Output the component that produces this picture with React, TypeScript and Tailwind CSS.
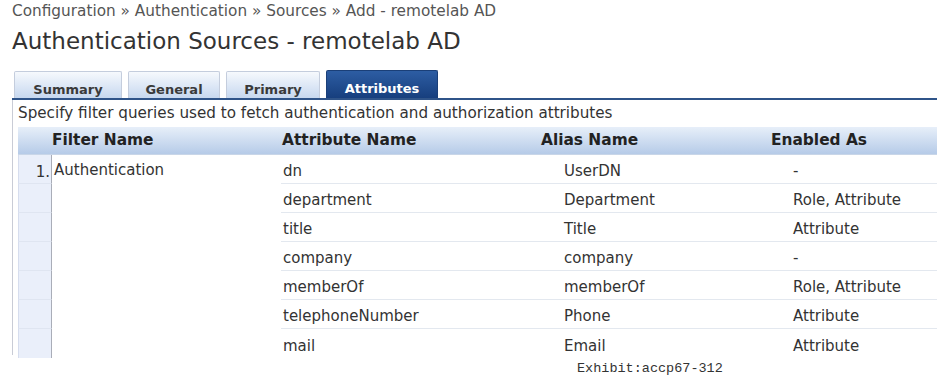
import React from "react";

const rows = [
  { attr: "dn", alias: "UserDN", en: "-" },
  { attr: "department", alias: "Department", en: "Role, Attribute" },
  { attr: "title", alias: "Title", en: "Attribute" },
  { attr: "company", alias: "company", en: "-" },
  { attr: "memberOf", alias: "memberOf", en: "Role, Attribute" },
  { attr: "telephoneNumber", alias: "Phone", en: "Attribute" },
  { attr: "mail", alias: "Email", en: "Attribute" },
];

const tabs = [
  { name: "Summary", w: "w-[108px]" },
  { name: "General", w: "w-[92px]" },
  { name: "Primary", w: "w-[94px]" },
];

export default function App() {
  return (
    <div className="w-[942px] h-[376px] overflow-hidden bg-white font-['DejaVu_Sans',sans-serif] text-[#333]">
      <div className="pl-3 pt-[2px] text-[15.3px] leading-[18px] text-[#555]">
        Configuration » Authentication » Sources » Add - remotelab AD
      </div>
      <div className="pl-3 mt-[7px] text-[23px] leading-[28px] text-[#333]">
        Authentication Sources - remotelab AD
      </div>

      <div className="ml-3 mr-[5px] mt-[15px]">
        <div className="flex items-end gap-[6px] pl-[2px] h-[28px]">
          {tabs.map((t) => (
            <div
              key={t.name}
              className={`${t.w} h-[27px] flex justify-center pt-[10px] text-[13px] leading-[16px] font-bold text-[#3a3a3a] border border-b-0 border-[#c4cddd] rounded-t-[2px] bg-gradient-to-b from-[#f6f9fd] to-[#c7d8ef]`}
            >
              {t.name}
            </div>
          ))}
          <div className="w-[112px] h-[28px] flex justify-center pt-[10px] text-[13px] leading-[16px] font-bold text-white border border-b-0 border-[#1a3f78] rounded-t-[2px] bg-gradient-to-b from-[#2d5da3] to-[#173f7e]">
            Attributes
          </div>
        </div>
        <div className="h-[2px] bg-[#2f5489]" />

        <div className="border-l border-[#c9ccd6] pl-[5px] h-[255px]">
          <div className="pt-[4px] pb-[5px] text-[15.2px] leading-[18px] text-[#333]">
            Specify filter queries used to fetch authentication and authorization attributes
          </div>

          <div className="flex h-[28px] items-center text-[15.4px] font-bold text-[#222] bg-gradient-to-b from-[#e7eff9] to-[#b6cbe8] border-b border-[#c9d6e8]">
            <div className="w-[34px]" />
            <div className="w-[229px]">Filter Name</div>
            <div className="w-[260px] pl-[1px]">Attribute Name</div>
            <div className="w-[230px]">Alias Name</div>
            <div className="flex-1">Enabled As</div>
          </div>

          {rows.map((r, i) => (
            <div key={r.attr} className="flex h-[29px] text-[15px] leading-[18px] text-[#333]">
              <div
                className={`w-[34px] shrink-0 bg-[#eaeffa] border-l border-[#d6ddee] border-r border-r-[#a9adb8] ${
                  i < rows.length - 1 ? "border-b border-b-[#dfe5f1]" : ""
                } flex justify-end pt-[8px] pr-[1px]`}
              >
                {i === 0 ? "1." : ""}
              </div>
              <div className="w-[229px] shrink-0 pl-[2px] pt-[6px]">
                {i === 0 ? "Authentication" : ""}
              </div>
              <div
                className={`flex flex-1 items-center ${
                  i < rows.length - 1 ? "border-b border-[#e3e8ef]" : ""
                }`}
              >
                <div className="w-[260px] pl-[2px] pt-[4px]">{r.attr}</div>
                <div className="w-[230px] pl-[23px] pt-[4px]">{r.alias}</div>
                <div className="flex-1 pl-[22px] pt-[4px]">{r.en}</div>
              </div>
            </div>
          ))}
        </div>
      </div>

      <div className="pl-[577px] mt-[6px] font-['Liberation_Mono',monospace] text-[13.5px] leading-[16px] text-[#333]">
        Exhibit:accp67-312
      </div>
    </div>
  );
}
